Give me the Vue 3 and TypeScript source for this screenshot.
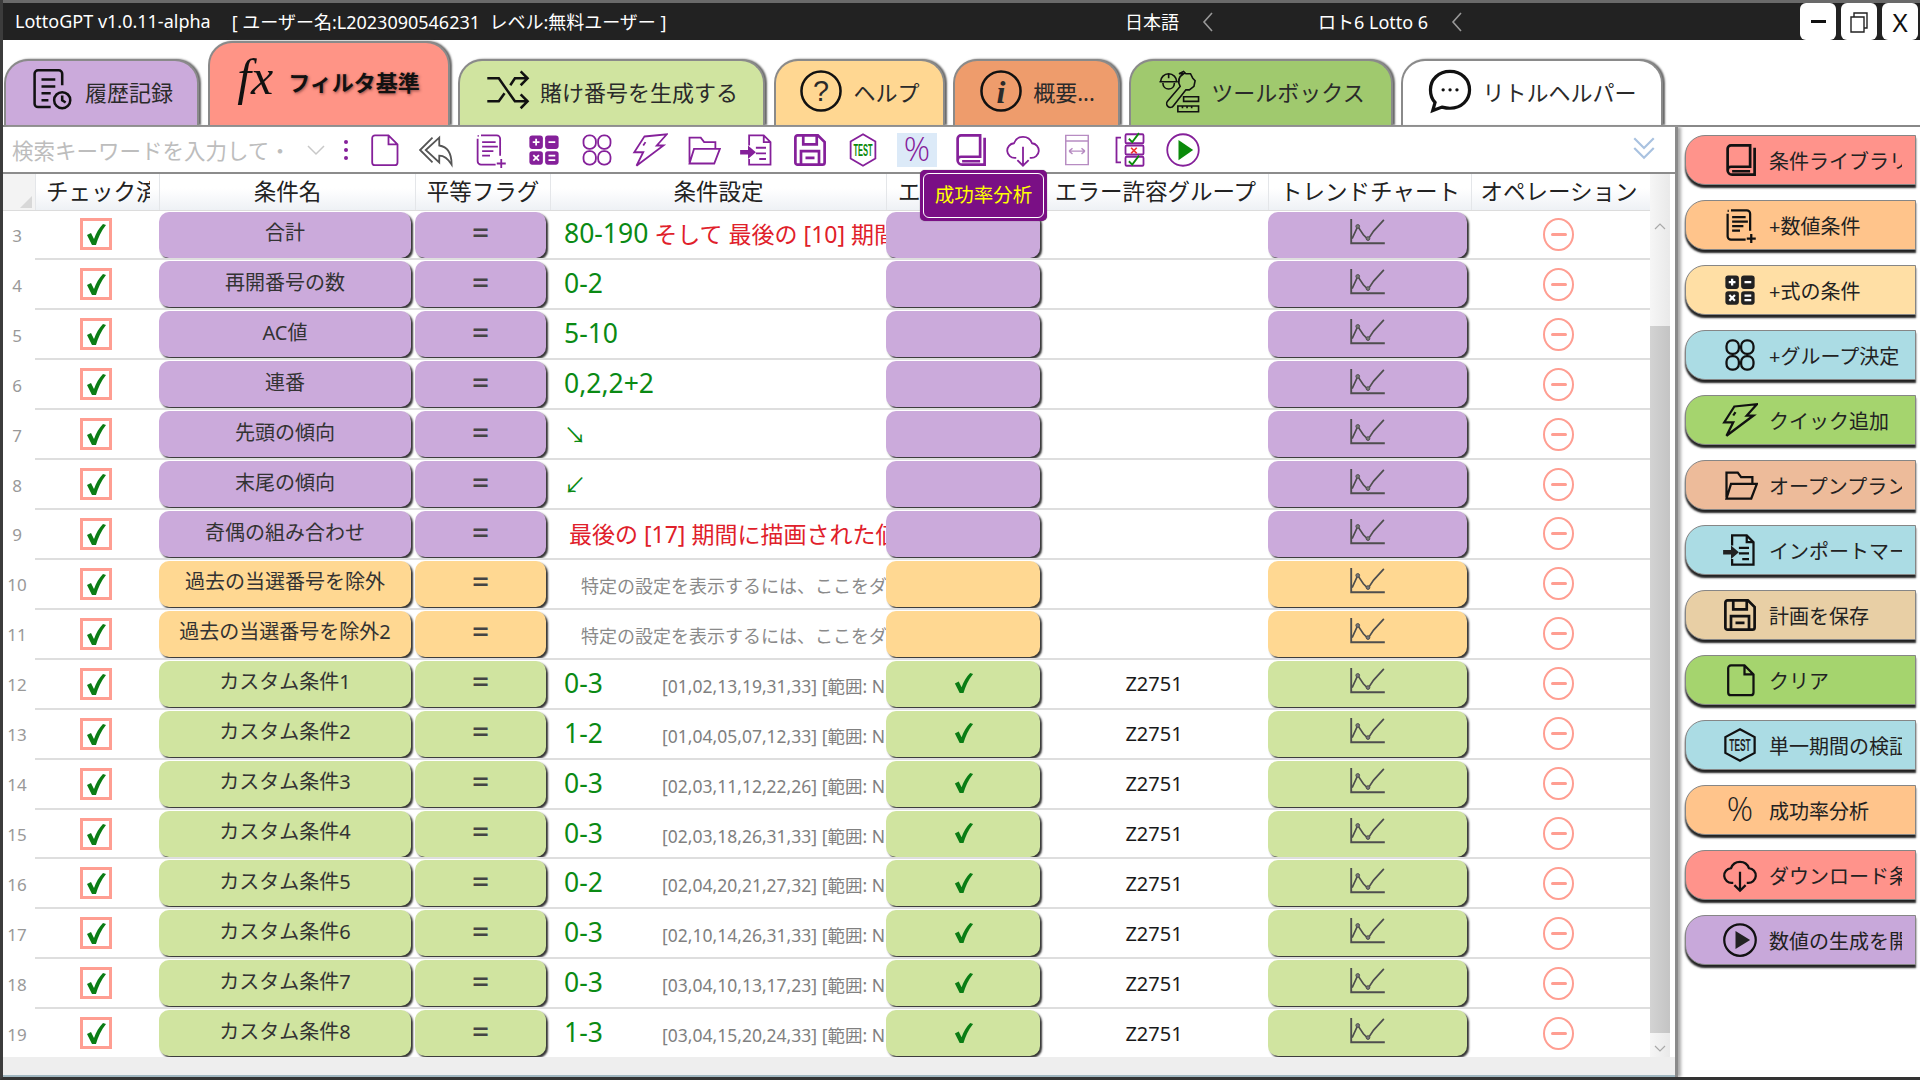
<script setup lang="ts">
const icons: Record<string, string> = {
  doc: '<path d="M8 3h12l8 8v16a2.500 2.500 0 0 1-2.500 2.500h-17.500a2.500 2.500 0 0 1-2.500-2.500v-21.500a2.500 2.500 0 0 1 2.500-2.500zM20 3v8h8"/>',
  back: '<path d="M18 5 6 16l12 11v-6c5 0 8 3 11 8 0-10-4-16-11-17zM12 5 1 16l11 11"/>',
  numplus: '<path d="M8 3h14a3 3 0 0 1 3 3v15M5 6v20a3 3 0 0 0 3 3h13M5 3.500h1M9 9h12M9 13h14M9 17h10M9 21h7M26 24v8M22 28h8"/>',
  calc: '<g fill="currentColor" stroke="none"><rect x="3" y="3" width="12" height="12" rx="2.500"/><rect x="17" y="3" width="12" height="12" rx="2.500"/><rect x="3" y="17" width="12" height="12" rx="2.500"/><rect x="17" y="17" width="12" height="12" rx="2.500"/></g><path stroke="#fff" d="M6 9h6M9 6v6M20 9h6M6.500 20.500l5 5M11.500 20.500l-5 5M20 21h6M20 25h6"/>',
  group: '<rect x="4" y="3" width="11" height="12" rx="5"/><rect x="17" y="3" width="11" height="12" rx="5"/><rect x="4" y="17" width="11" height="12" rx="5"/><rect x="17" y="17" width="11" height="12" rx="5"/>',
  bolt: '<path d="M11 4 31 2 22 12h6L4 30l6-12H2zM12 9l-2 3"/>',
  folder: '<path d="M4 27V5h10l3 4h10v6M4 28l4-13h23l-5 13z"/>',
  importdoc: '<path d="M9 12V3h13l6 6v20H9v-5M22 3v6h6M15 14h9M15 19h9M18 24h6" /><path fill="currentColor" stroke="none" d="M1 16h7v-4l7 6-7 6v-4H1z"/>',
  save: '<path d="M5 3h18l6 6v18a2 2 0 0 1-2 2H5a2 2 0 0 1-2-2V5a2 2 0 0 1 2-2zM10 3v8h12V3M8 29V17h16v12M12 23h8" stroke-width="2.400"/>',
  book: '<path d="M5 25V6a3 3 0 0 1 3-3h17v19H8a3 3 0 0 0-3 3 4 4 0 0 0 4 4h20V5M9 26h16" stroke-width="2.400"/>',
  cloud: '<path d="M10 23H9a6.500 6.500 0 0 1-1-13 8.500 8.500 0 0 1 16 0 6.500 6.500 0 0 1-1 13h-1M16 13v17M11 25l5 5 5-5"/>',
  win: '<path d="M6 3h20v26H6zM6 8h20M9 17h14M9 17l3-2.500M9 17l3 2.500M23 17l-3-2.500M23 17l-3 2.500" stroke-width="1.300"/>',
  list: '<path d="M8 5H4v22h4"/><rect x="12" y="2" width="16" height="8" rx="1"/><rect x="12" y="12" width="16" height="8" rx="1"/><rect x="12" y="22" width="16" height="8" rx="1"/><path stroke="#0a8a0a" d="M15 6l3 3 6-8M15 26l3 3 6-8"/><path stroke="#e33" stroke-width="1.500" d="M17 14l5 5M22 14l-5 5"/>',
  play: '<circle cx="16" cy="16" r="14"/><path fill="currentColor" stroke="none" d="M12 8l13 8-13 8z"/>',
  playgreen: '<circle cx="16" cy="16" r="14"/><path fill="#0a8a0a" stroke="none" d="M12 7l13 9-13 9z"/>',
  test: '<path d="M16 2l13 7v14l-13 7-13-7V9z"/><text x="16" y="21" text-anchor="middle" font-size="14" font-weight="700" textLength="19" lengthAdjust="spacingAndGlyphs" font-family="Liberation Sans, sans-serif" fill="currentColor" stroke="none">TEST</text>',
  testgreen: '<path d="M16 2l11 6.500v15L16 30 5 23.500v-15z"/><text x="16" y="21" text-anchor="middle" font-size="14" font-weight="700" textLength="17" lengthAdjust="spacingAndGlyphs" font-family="Liberation Sans, sans-serif" fill="#0a8a0a" stroke="none">TEST</text>',
  percent: '<text x="16" y="26" text-anchor="middle" font-size="29" font-weight="300" font-family="Open Sans, Lato, sans-serif" fill="currentColor" stroke="none">%</text>',
  history: '<path d="M28 15V5a3 3 0 0 0-3-3H7a3 3 0 0 0-3 3v26a3 3 0 0 0 3 3h11M10 10h12M10 16h12M10 22h8M10 28h6"/><circle cx="28" cy="28" r="7"/><path d="M28 24v4l3 2"/>',
  shuffle: '<path d="M2 9h10l14 20h10M2 29h10l5-7M22 15l4-6h10M31 3l6 6-6 6M31 23l6 6-6 6"/>',
  help: '<circle cx="20" cy="20" r="17"/><text x="20" y="29" text-anchor="middle" font-size="25" font-family="Liberation Sans, sans-serif" fill="currentColor" stroke="none">?</text>',
  info: '<circle cx="20" cy="20" r="17"/><text x="20" y="30" text-anchor="middle" font-size="28" font-style="italic" font-weight="700" font-family="Liberation Serif, serif" fill="currentColor" stroke="none">i</text>',
  tools: '<g stroke-width="1.400"><path d="M4 12a7 7 0 0 1 14 0zM3 12h16M6 13c0 7 10 7 10 0M11 5v4"/><path d="M20 5l4-2 2 2 4 0 2 4 2 2-1 5-4 3-3 0-11 14a3 3 0 0 1-5-4l11-13c-2-4-2-8 3-11z"/><path d="M24 25h13v4H24zM19 33h18v5H19zM23 33v2M27 33v2M31 33v2"/></g>',
  chat: '<path d="M20 3c10 0 17 7 17 16s-7 16-17 16c-3 0-5-.500-7-1l-8 3 2-7c-3-3-4-7-4-11C3 10 10 3 20 3z" stroke-width="2.800"/><path stroke-linecap="round" stroke-width="2.800" d="M14 19h.100M20 19h.100M26 19h.100"/>',
}

const tabs = [
  { label: '履歴記録', icon: 'history', cls: 'tab-purple', w: 195 },
  { label: 'フィルタ基準', icon: '', cls: 'tab-active', w: 242 },
  { label: '賭け番号を生成する', icon: 'shuffle', cls: 'tab-lime', w: 307 },
  { label: 'ヘルプ', icon: 'help', cls: 'tab-amber', w: 171 },
  { label: '概要...', icon: 'info', cls: 'tab-orange', w: 167 },
  { label: 'ツールボックス', icon: 'tools', cls: 'tab-green', w: 264 },
  { label: 'リトルヘルパー', icon: 'chat', cls: 'tab-white', w: 262 },
]

const tools = [
  { i: 'doc' }, { i: 'back', gray: true }, { i: 'numplus' }, { i: 'calc' }, { i: 'group' }, { i: 'bolt' },
  { i: 'folder' }, { i: 'importdoc' }, { i: 'save' }, { i: 'testgreen' }, { i: 'percent', on: true },
  { i: 'book' }, { i: 'cloud' }, { i: 'win', pale: true }, { i: 'list' }, { i: 'playgreen' },
]

const sideButtons = [
  { label: '条件ライブラリ', icon: 'book', cls: 's-red' },
  { label: '+数値条件', icon: 'numplus', cls: 's-orange' },
  { label: '+式の条件', icon: 'calc', cls: 's-yellow' },
  { label: '+グループ決定', icon: 'group', cls: 's-blue' },
  { label: 'クイック追加', icon: 'bolt', cls: 's-green' },
  { label: 'オープンプラン', icon: 'folder', cls: 's-peach' },
  { label: 'インポートマーク', icon: 'importdoc', cls: 's-blue' },
  { label: '計画を保存', icon: 'save', cls: 's-sand' },
  { label: 'クリア', icon: 'doc', cls: 's-green' },
  { label: '単一期間の検証', icon: 'test', cls: 's-blue' },
  { label: '成功率分析', icon: 'percent', cls: 's-orange' },
  { label: 'ダウンロード条件', icon: 'cloud', cls: 's-red' },
  { label: '数値の生成を開始', icon: 'play', cls: 's-purple' },
]

interface Row {
  n: number
  name: string
  color: 'purple' | 'amber' | 'lime'
  green?: string
  red?: string
  gray?: string
  nums?: string
  done?: boolean
  group?: string
}

const rows: Row[] = [
  { n: 3, name: '合計', color: 'purple', green: '80-190', red: ' そして 最後の [10] 期間に描画された値' },
  { n: 4, name: '再開番号の数', color: 'purple', green: '0-2' },
  { n: 5, name: 'AC値', color: 'purple', green: '5-10' },
  { n: 6, name: '連番', color: 'purple', green: '0,2,2+2' },
  { n: 7, name: '先頭の傾向', color: 'purple', green: '↘' },
  { n: 8, name: '末尾の傾向', color: 'purple', green: '↙' },
  { n: 9, name: '奇偶の組み合わせ', color: 'purple', red: '最後の [17] 期間に描画された値' },
  { n: 10, name: '過去の当選番号を除外', color: 'amber', gray: '特定の設定を表示するには、ここをダブルクリック' },
  { n: 11, name: '過去の当選番号を除外2', color: 'amber', gray: '特定の設定を表示するには、ここをダブルクリック' },
  { n: 12, name: 'カスタム条件1', color: 'lime', green: '0-3', nums: '[01,02,13,19,31,33] [範囲: N', done: true, group: 'Z2751' },
  { n: 13, name: 'カスタム条件2', color: 'lime', green: '1-2', nums: '[01,04,05,07,12,33] [範囲: N', done: true, group: 'Z2751' },
  { n: 14, name: 'カスタム条件3', color: 'lime', green: '0-3', nums: '[02,03,11,12,22,26] [範囲: N', done: true, group: 'Z2751' },
  { n: 15, name: 'カスタム条件4', color: 'lime', green: '0-3', nums: '[02,03,18,26,31,33] [範囲: N', done: true, group: 'Z2751' },
  { n: 16, name: 'カスタム条件5', color: 'lime', green: '0-2', nums: '[02,04,20,21,27,32] [範囲: N', done: true, group: 'Z2751' },
  { n: 17, name: 'カスタム条件6', color: 'lime', green: '0-3', nums: '[02,10,14,26,31,33] [範囲: N', done: true, group: 'Z2751' },
  { n: 18, name: 'カスタム条件7', color: 'lime', green: '0-3', nums: '[03,04,10,13,17,23] [範囲: N', done: true, group: 'Z2751' },
  { n: 19, name: 'カスタム条件8', color: 'lime', green: '1-3', nums: '[03,04,15,20,24,33] [範囲: N', done: true, group: 'Z2751' },
]

const headers = ['チェック済', '条件名', '平等フラグ', '条件設定', 'エラー許容', 'エラー許容グループ', 'トレンドチャート', 'オペレーション']
</script>

<template>
  <div class="win">
    <header class="titlebar">
      <span class="app">LottoGPT v1.0.11-alpha</span>
      <span class="user">[ ユーザー名:L2023090546231&nbsp;&nbsp;レベル:無料ユーザー ]</span>
      <span class="lang">日本語</span>
      <svg class="chev c1" viewBox="0 0 12 22"><path d="M10 2 2 11l8 9" /></svg>
      <span class="lotto">ロト6 Lotto 6</span>
      <svg class="chev c2" viewBox="0 0 12 22"><path d="M10 2 2 11l8 9" /></svg>
      <div class="winbtns">
        <button class="wb"><span class="dash"></span></button>
        <button class="wb"><svg class="restore" viewBox="0 0 20 24"><path d="M2 7h13v15H2zM5 7V3h13v15h-3" /></svg></button>
        <button class="wb wx">X</button>
      </div>
    </header>

    <nav class="tabs">
      <div v-for="t in tabs" :key="t.label" class="tab" :class="t.cls" :style="{ width: t.w + 'px' }">
        <span v-if="!t.icon" class="fx">fx</span>
        <svg v-else class="tab-icon" viewBox="0 0 40 40" v-html="icons[t.icon]"></svg>
        <span class="tab-label">{{ t.label }}</span>
      </div>
    </nav>

    <div class="main">
      <section class="left">
        <div class="toolbar">
          <span class="search">検索キーワードを入力して・</span>
          <svg class="drop" viewBox="0 0 20 12"><path d="M2 2l8 8 8-8" /></svg>
          <span class="dots"><i></i><i></i><i></i></span>
          <span
            v-for="(t, idx) in tools"
            :key="idx"
            class="tool"
            :class="{ on: t.on, gray: t.gray, pale: t.pale }"
          >
            <svg class="tool-icon" viewBox="0 0 32 32" v-html="icons[t.i]"></svg>
          </span>
          <svg class="collapse" viewBox="0 0 24 24"><path d="M3 3l9 9 9-9M3 12l9 9 9-9" /></svg>
        </div>

        <div class="table-wrap">
          <div class="table">
            <div class="thead grid">
              <div class="corner"><span class="tri"></span></div>
              <div v-for="h in headers" :key="h" class="th">{{ h }}</div>
            </div>
            <div v-for="r in rows" :key="r.n" class="tr grid">
              <div class="num">{{ r.n }}</div>
              <div class="cell center chk">
                <span class="check">
                  <svg viewBox="0 0 24 24"><path d="M3 13l4-2 3 6c2-6 5-11 9-15l3 1c-5 6-8 13-10 20H8z" /></svg>
                </span>
              </div>
              <div class="cell"><button class="rbtn name" :class="r.color">{{ r.name }}</button></div>
              <div class="cell"><button class="rbtn eq" :class="r.color">=</button></div>
              <div class="cell setting">
                <span v-if="r.green" class="g" :class="{ arrow: r.n === 7 || r.n === 8 }">{{ r.green }}</span>
                <span v-if="r.red" class="r" :class="{ only: !r.green }">{{ r.red }}</span>
                <span v-if="r.gray" class="hint">{{ r.gray }}</span>
                <span v-if="r.nums" class="nums">{{ r.nums }}</span>
              </div>
              <div class="cell">
                <button class="rbtn tol" :class="r.color">
                  <svg v-if="r.done" class="tick" viewBox="0 0 24 24"><path d="M3 13l4-2 3 6c2-6 5-11 9-15l3 1c-5 6-8 13-10 20H8z" /></svg>
                </button>
              </div>
              <div class="cell center grp">{{ r.group }}</div>
              <div class="cell">
                <button class="rbtn trend" :class="r.color">
                  <svg class="chart" viewBox="0 0 40 30">
                    <path d="M2 1v26h36" stroke-width="2" />
                    <path d="M3 22 9 9l6 9 5 5 6-9 11-12" stroke-width="1.800" />
                    <circle cx="9" cy="9" r="2" />
                    <circle cx="20" cy="22" r="2" />
                  </svg>
                </button>
              </div>
              <div class="cell center op">
                <span class="minus"><i></i></span>
              </div>
            </div>
          </div>
          <div class="scroll">
            <svg class="sarrow" viewBox="0 0 12 8"><path d="M1 7l5-5 5 5" /></svg>
            <div class="thumb"></div>
            <svg class="sarrow" viewBox="0 0 12 8"><path d="M1 1l5 5 5-5" /></svg>
          </div>
          <div class="tip"><span>成功率分析</span></div>
        </div>
        <div class="foot"></div>
      </section>

      <aside class="side">
        <div v-for="b in sideButtons" :key="b.label" class="sbtn" :class="b.cls">
          <svg class="s-icon" viewBox="0 0 32 32" v-html="icons[b.icon]"></svg>
          <span class="s-label">{{ b.label }}</span>
        </div>
      </aside>
    </div>
  </div>
</template>

<style>
html, body { margin: 0; background: #fff; }
</style>

<style scoped>
.win {
  width: 1920px;
  height: 1080px;
  overflow: hidden;
  background: #fff;
  display: flex;
  flex-direction: column;
  box-sizing: border-box;
  border-left: 3px solid #3c3c3c;
  border-bottom: 3px solid #333;
  font-family: "Noto Sans", "Noto Sans CJK JP", sans-serif;
  color: #222;
}
.titlebar {
  height: 40px;
  flex: none;
  box-sizing: border-box;
  margin-left: -3px;
  border-top: 3px solid #6a6a6a;
  background: #222;
  color: #fff;
  display: flex;
  align-items: center;
  padding: 0 2px 0 15px;
  font-size: 18px;
  white-space: nowrap;
}
.app, .user, .lang, .lotto { margin-top: -2px; }
.user { margin-left: 21px; }
.lang { position: absolute; left: 1125px; }
.lotto { position: absolute; left: 1318px; }
.chev { width: 12px; height: 22px; fill: none; stroke: #999; stroke-width: 1.600; position: absolute; }
.c1 { left: 1202px; }
.c2 { left: 1451px; }
.winbtns { margin-left: auto; display: flex; gap: 5px; height: 37px; }
.wb {
  width: 36px;
  height: 37px;
  padding: 0;
  border: 0;
  border-radius: 6px;
  background: #fff;
  color: #111;
  display: flex;
  align-items: center;
  justify-content: center;
  font: 26px "Noto Sans", sans-serif;
}
.dash { width: 15px; height: 3px; background: #111; }
.restore { width: 20px; height: 24px; fill: none; stroke: #222; stroke-width: 1.400; }

.tabs {
  height: 85px;
  flex: none;
  display: flex;
  align-items: flex-end;
  padding-left: 1px;
  gap: 8.500px;
}
.tab {
  height: 66px;
  box-sizing: border-box;
  flex: none;
  display: flex;
  align-items: center;
  justify-content: center;
  gap: 9px;
  padding-bottom: 4px;
  border: 2px solid #8a8a8a;
  border-bottom: 0;
  border-radius: 24px 24px 0 0;
  box-shadow: 2px 0 2px #666;
  font-size: 22px;
  color: #2a2a2a;
}
.tab-purple { background: #cbaadb; }
.tab-active { background: #ff9486; height: 84px; padding-bottom: 6px; }
.tab-lime { background: #d0e4a0; }
.tab-amber { background: #ffd792; }
.tab-orange { background: #ee9c6c; }
.tab-green { background: #a0c96e; }
.tab-white { background: #fff; }
.tab-active .tab-label { font-weight: 700; color: #111; text-shadow: 1px 1px 3px rgba(60, 20, 20, .6); }
.tab-icon {
  width: 46px;
  height: 46px;
  fill: none;
  stroke: #111;
  stroke-width: 2.200;
  flex: none;
}
.fx {
  font: italic 50px "Liberation Serif", serif;
  color: #111;
  line-height: 1;
  margin-top: -8px;
  width: 42px;
}

.main {
  flex: 1;
  min-height: 0;
  display: flex;
  border-top: 2px solid #888;
}
.left {
  width: 1672px;
  flex: none;
  display: flex;
  flex-direction: column;
  border-right: 3px solid #8a8a8a;
  box-shadow: 3px 0 3px #aaa;
  position: relative;
}
.toolbar {
  height: 45px;
  flex: none;
  display: flex;
  align-items: center;
  border-bottom: 2px solid #8c8c8c;
  padding-left: 9px;
  position: relative;
}
.search {
  width: 286px;
  overflow: hidden;
  white-space: nowrap;
  color: #bdbdbd;
  font-size: 21.500px;
  flex: none;
}
.drop { width: 20px; height: 12px; fill: none; stroke: #c8c8c8; stroke-width: 1.500; flex: none; margin-left: 8px; }
.dots { display: flex; flex-direction: column; gap: 4px; margin-left: 18px; margin-right: 9px; flex: none; }
.dots i { width: 4px; height: 4px; border-radius: 50%; background: #85209a; display: block; }
.tool {
  width: 53.300px;
  height: 34px;
  display: flex;
  justify-content: center;
  align-items: center;
  flex: none;
  color: #85209a;
}
.tool.on { background: linear-gradient(#dceaf8, #dceaf8) center / 40px 34px no-repeat; }
.tool.gray { color: #555; }
.tool.pale { color: #b78cc2; }
.tool-icon { width: 36px; height: 36px; fill: none; stroke: currentColor; stroke-width: 1.600; }
.collapse {
  position: absolute;
  right: 18px;
  top: 8px;
  width: 26px;
  height: 26px;
  fill: none;
  stroke: #a9c2e0;
  stroke-width: 2;
}

.table-wrap {
  flex: 1;
  min-height: 0;
  display: flex;
  position: relative;
}
.table { width: 1647px; flex: none; }
.grid {
  display: grid;
  grid-template-columns: 32px 124px 256px 135px 336px 160px 222px 203px 179px;
}
.thead {
  height: 36.500px;
  background: linear-gradient(#fff 40%, #eef1f5);
  border-bottom: 1px solid #dcdcdc;
  box-sizing: border-box;
  font-size: 22.500px;
  color: #222;
}
.corner { background: #f3f3f3; position: relative; }
.tri {
  position: absolute;
  right: 3px;
  bottom: 2px;
  width: 0;
  height: 0;
  border-left: 12px solid transparent;
  border-bottom: 12px solid #d8d8d8;
}
.th {
  border-left: 1px solid #e4e6e9;
  text-align: center;
  overflow: hidden;
  white-space: nowrap;
  line-height: 36px;
  min-width: 0;
  box-sizing: border-box;
}
.th:nth-child(2) { text-align: left; margin-right: 9px; padding-left: 10px; }
.th:nth-child(6) { text-align: left; padding-left: 11px; }
.th:nth-child(7) { padding-right: 4px; }
.th:nth-child(9) { padding-right: 4px; }
.tr {
  height: 49.930px;
  box-sizing: border-box;
}
.num {
  font-size: 17px;
  color: #999;
  display: flex;
  align-items: center;
  justify-content: center;
  padding-right: 4px;
  height: 49.930px;
  box-sizing: border-box;
}
.cell {
  border-bottom: 2px solid #dedede;
  min-width: 0;
  overflow: hidden;
  box-sizing: border-box;
  height: 49.930px;
  padding-top: 1px;
}
.center { display: flex; align-items: center; justify-content: center; padding-top: 0; }
.chk { padding-right: 2px; }
.op { padding-right: 4px; }
.check {
  width: 32px;
  height: 32px;
  box-sizing: border-box;
  border: 3px solid #ff9e92;
  display: flex;
  align-items: center;
  justify-content: center;
  background: #fff;
}
.check svg { width: 24px; height: 24px; fill: #0a7d14; }
.rbtn {
  display: flex;
  align-items: center;
  justify-content: center;
  height: 46px;
  padding: 0;
  border: 0;
  border-radius: 10px;
  box-shadow: 2px 2px 2px #333;
  font: 20px "Noto Sans", "Noto Sans CJK JP", sans-serif;
  color: #333;
  box-sizing: border-box;
  padding-bottom: 6px;
}
.purple { background: #cbaadb; }
.amber { background: #ffd892; }
.lime { background: #d0e4a0; }
.name { width: 252px; }
.eq { width: 131px; font-size: 30px; color: #444; font-weight: 500; padding-bottom: 4px; }
.tol { width: 154px; padding-bottom: 2px; }
.trend { width: 199px; padding-bottom: 5px; }
.tick { width: 23px; height: 23px; fill: #0a7d14; }
.chart { width: 38px; height: 28px; fill: none; stroke: #4e4e4e; }
.chart circle { fill: #777; stroke: #4e4e4e; stroke-width: 1; }
.setting {
  display: flex;
  align-items: center;
  white-space: nowrap;
  padding: 0 0 2px 14px;
}
.g { color: #0a8a14; font-size: 26.500px; }
.g.arrow { font-size: 22px; }
.r { color: #e0202a; font-size: 23px; white-space: pre; }
.r.only { margin-left: 5px; }
.hint { color: #8a8a8a; font-size: 18px; margin-left: 17px; margin-top: 5px; }
.nums {
  color: #808080;
  font-size: 17.500px;
  margin-top: 5px;
  position: absolute;
  margin-left: 98px;
}
.grp { font-size: 20px; color: #1a1a1a; padding-right: 6px; }
.minus {
  width: 31px;
  height: 33px;
  box-sizing: border-box;
  border: 2.500px solid #ff9e92;
  border-radius: 50%;
  display: flex;
  align-items: center;
  justify-content: center;
}
.minus i { width: 16px; height: 3px; background: #ff9e92; border-radius: 2px; }

.scroll {
  width: 20px;
  flex: none;
  background: linear-gradient(90deg, #f6f6f6, #e9e9e9);
  display: flex;
  flex-direction: column;
  align-items: center;
  padding-top: 48px;
  box-sizing: border-box;
  height: 884px;
}
.sarrow { width: 12px; height: 8px; fill: none; stroke: #a9a9a9; stroke-width: 1.200; flex: none; }
.thumb {
  align-self: stretch;
  height: 707px;
  flex: none;
  margin: 96px 0 12px;
  background: linear-gradient(90deg, #d3d3d3, #c4c4c4);
}
.tip {
  position: absolute;
  left: 917px;
  top: -4px;
  width: 127px;
  height: 51px;
  box-sizing: border-box;
  background: #7a0f85;
  border-radius: 5px;
  padding: 3px;
  z-index: 3;
  box-shadow: 0 0 1px #555;
}
.tip span {
  display: flex;
  align-items: center;
  justify-content: center;
  width: 100%;
  height: 100%;
  box-sizing: border-box;
  border: 1.500px solid #fff;
  border-radius: 6px;
  color: #ffff00;
  font-size: 19.500px;
  padding-bottom: 4px;
}
.foot {
  height: 18px;
  flex: none;
  background: #eeeeee;
  border-bottom: 2px solid #9fb6c0;
  margin-top: -18px;
  position: relative;
}

.side {
  flex: 1;
  min-width: 0;
  padding: 8px 0 0 7px;
  display: flex;
  flex-direction: column;
  gap: 15px;
  box-sizing: border-box;
}
.sbtn {
  width: 231px;
  height: 50px;
  flex: none;
  box-sizing: border-box;
  border: 1.500px solid #868686;
  border-right-width: 1px;
  border-radius: 20px 0 0 20px;
  box-shadow: 0 3px 2px #222;
  display: flex;
  align-items: center;
  padding-left: 36px;
  gap: 11px;
  font-size: 20px;
  color: #222;
}
.s-icon { width: 36px; height: 36px; fill: none; stroke: #111; stroke-width: 2; flex: none; }
.s-label { width: 133px; overflow: hidden; white-space: nowrap; }
.s-red { background: #ff938b; }
.s-orange { background: #ffc48b; }
.s-yellow { background: #ffdfa5; }
.s-blue { background: #abdce4; }
.s-green { background: #a5d46e; }
.s-peach { background: #edbb9a; }
.s-sand { background: #e8cfa5; }
.s-purple { background: #c8a8da; }
</style>
